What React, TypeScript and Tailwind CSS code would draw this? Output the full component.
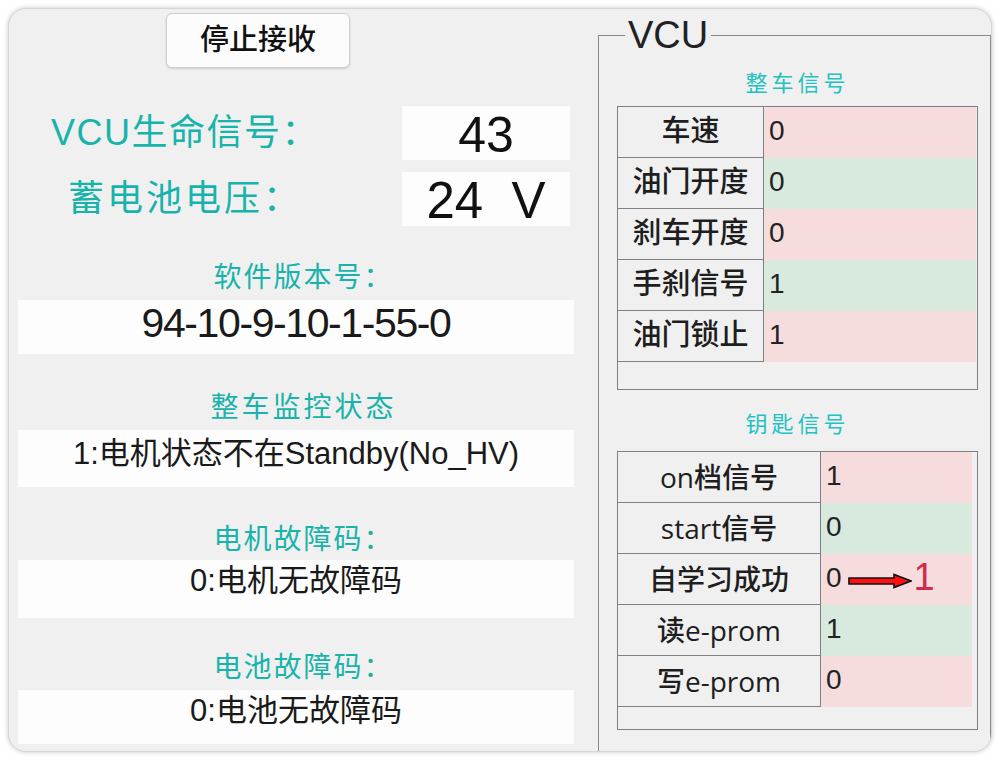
import React from "react"

const sans = { fontFamily: '"Liberation Sans", "Noto Sans CJK SC", sans-serif' }
const segoe = { fontFamily: '"Open Sans", "Noto Sans CJK SC", sans-serif' }

type Row = { label: string; value: string; tone: "red" | "green"; changed?: boolean }

const carSignals: Row[] = [
  { label: "车速", value: "0", tone: "red" },
  { label: "油门开度", value: "0", tone: "green" },
  { label: "刹车开度", value: "0", tone: "red" },
  { label: "手刹信号", value: "1", tone: "green" },
  { label: "油门锁止", value: "1", tone: "red" },
]

const keySignals: Row[] = [
  { label: "on档信号", value: "1", tone: "red" },
  { label: "start信号", value: "0", tone: "green" },
  { label: "自学习成功", value: "0", tone: "red", changed: true },
  { label: "读e-prom", value: "1", tone: "green" },
  { label: "写e-prom", value: "0", tone: "red" },
]

function Arrow() {
  return (
    <svg width="64" height="16" viewBox="0 0 64 16" className="ml-[6px] mt-[3px]">
      <polygon
        points="1,5 46,5 46,1.5 63,8 46,14.5 46,11 1,11"
        fill="#ff1010"
        stroke="#111"
        strokeWidth="1.6"
        strokeLinejoin="miter"
      />
    </svg>
  )
}

function SignalTable({
  rows,
  labelWidth,
  labelSize,
  height,
  valueInset,
  labelFont,
}: {
  rows: Row[]
  labelWidth: string
  labelSize: string
  height: string
  valueInset: string
  labelFont: React.CSSProperties
}) {
  return (
    <div className={`w-[361px] ${height} border border-[#808080] flex flex-col`}>
      {rows.map((row) => (
        <div key={row.label} className="flex h-[51px]">
          <div
            className={`${labelWidth} ${labelSize} shrink-0 border-r border-b border-[#808080] bg-[#f0f0f0] flex items-center justify-center font-medium text-[#1e1e1e] whitespace-nowrap`}
            style={labelFont}
          >
            {row.label}
          </div>
          <div
            className={`flex-1 ${valueInset} flex items-center pl-[5px] text-[28px] text-[#222] ${
              row.tone === "red" ? "bg-[#f6dcdd]" : "bg-[#d7eadd]"
            }`}
            style={sans}
          >
            <span className="-mt-[4px]">{row.value}</span>
            {row.changed && (
              <>
                <Arrow />
                <span className="ml-[2px] -mt-[4px] text-[38px] font-light text-[#d22a4c]">1</span>
              </>
            )}
          </div>
        </div>
      ))}
    </div>
  )
}

function Heading({ text, className }: { text: string; className: string }) {
  return (
    <div
      className={`h-[30px] leading-[30px] text-center text-[28px] text-[#18b3ab] ${className}`}
      style={sans}
    >
      {text}
    </div>
  )
}

function InfoBox({ text, className, textClass }: { text: string; className: string; textClass: string }) {
  return (
    <div className={`w-[556px] bg-[#fdfdfd] flex justify-center text-[#1a1a1a] ${className}`} style={sans}>
      <span className={textClass}>{text}</span>
    </div>
  )
}

export default function App() {
  return (
    <div className="min-h-[760px] bg-white p-2">
      <div className="w-[984px] h-[744px] rounded-[18px] border border-[#d6d6d6] bg-[#f0f0f0] shadow-[0_0_5px_rgba(0,0,0,0.22)] overflow-hidden flex">
        {/* left column */}
        <div className="w-[589px] shrink-0 px-[9px] flex flex-col">
          <button
            className="mt-[4px] ml-[148px] w-[184px] h-[55px] rounded-[6px] border border-[#cfcfcf] bg-[#fcfcfc] shadow-[0_1px_2px_rgba(0,0,0,0.15)] text-[29px] font-medium text-[#111]"
            style={sans}
          >
            停止接收
          </button>

          <div className="mt-[38px] flex items-center">
            <div className="w-[316px] pl-[18px] text-center text-[36px] tracking-[1.5px] text-[#18b3ab]" style={sans}>
              VCU生命信号：
            </div>
            <div className="ml-[68px] w-[168px] h-[54px] bg-[#fdfdfd] flex items-center justify-center pt-[5px] text-[50px] text-[#111]" style={sans}>
              43
            </div>
          </div>
          <div className="mt-[12px] flex items-center">
            <div className="w-[316px] pl-[18px] text-center text-[36px] tracking-[3px] text-[#18b3ab]" style={sans}>
              蓄电池电压：
            </div>
            <div className="ml-[68px] w-[168px] h-[54px] bg-[#fdfdfd] flex items-center justify-center pt-[4px] text-[51px] text-[#111] whitespace-pre" style={sans}>
              {"24  V"}
            </div>
          </div>

          <Heading text="软件版本号：" className="mt-[37px] tracking-[2px]" />
          <InfoBox
            text="94-10-9-10-1-55-0"
            className="mt-[7px] h-[54px] items-center"
            textClass="text-[41px] tracking-[-1.4px] -mt-[6px]"
          />

          <Heading text="整车监控状态" className="mt-[39px] tracking-[3px]" />
          <InfoBox
            text="1:电机状态不在Standby(No_HV)"
            className="mt-[7px] h-[57px] items-start"
            textClass="text-[31px] leading-[36px] pt-[6px]"
          />

          <Heading text="电机故障码：" className="mt-[38px] tracking-[2px]" />
          <InfoBox
            text="0:电机无故障码"
            className="mt-[5px] h-[58px] items-start"
            textClass="text-[31px] leading-[36px] pt-[3px]"
          />

          <Heading text="电池故障码：" className="mt-[35px] tracking-[2px]" />
          <InfoBox
            text="0:电池无故障码"
            className="mt-[7px] h-[54px] items-start"
            textClass="text-[31px] leading-[36px] pt-[3px]"
          />
        </div>

        {/* right group box */}
        <fieldset className="mt-[4px] w-[393px] h-[780px] shrink-0 border border-[#8a8a8a] pl-[18px]">
          <legend className="ml-[8px] px-[3px] text-[38px] leading-[44px] text-[#222]" style={sans}>
            VCU
          </legend>

          <div className="w-[361px] mt-[14px] h-[26px] leading-[26px] text-center text-[22px] tracking-[4px] text-[#22c2c2]" style={sans}>
            整车信号
          </div>
          <div className="mt-[9px]">
            <SignalTable
              rows={carSignals}
              labelWidth="w-[146px]"
              labelSize="text-[29px]"
              height="h-[284px]"
              valueInset="mr-[1px]"
              labelFont={sans}
            />
          </div>

          <div className="w-[361px] mt-[22px] h-[26px] leading-[26px] text-center text-[22px] tracking-[4px] text-[#22c2c2]" style={sans}>
            钥匙信号
          </div>
          <div className="mt-[13px]">
            <SignalTable
              rows={keySignals}
              labelWidth="w-[203px]"
              labelSize="text-[28px]"
              height="h-[279px]"
              valueInset="mr-[5px]"
              labelFont={segoe}
            />
          </div>
        </fieldset>
      </div>
    </div>
  )
}
